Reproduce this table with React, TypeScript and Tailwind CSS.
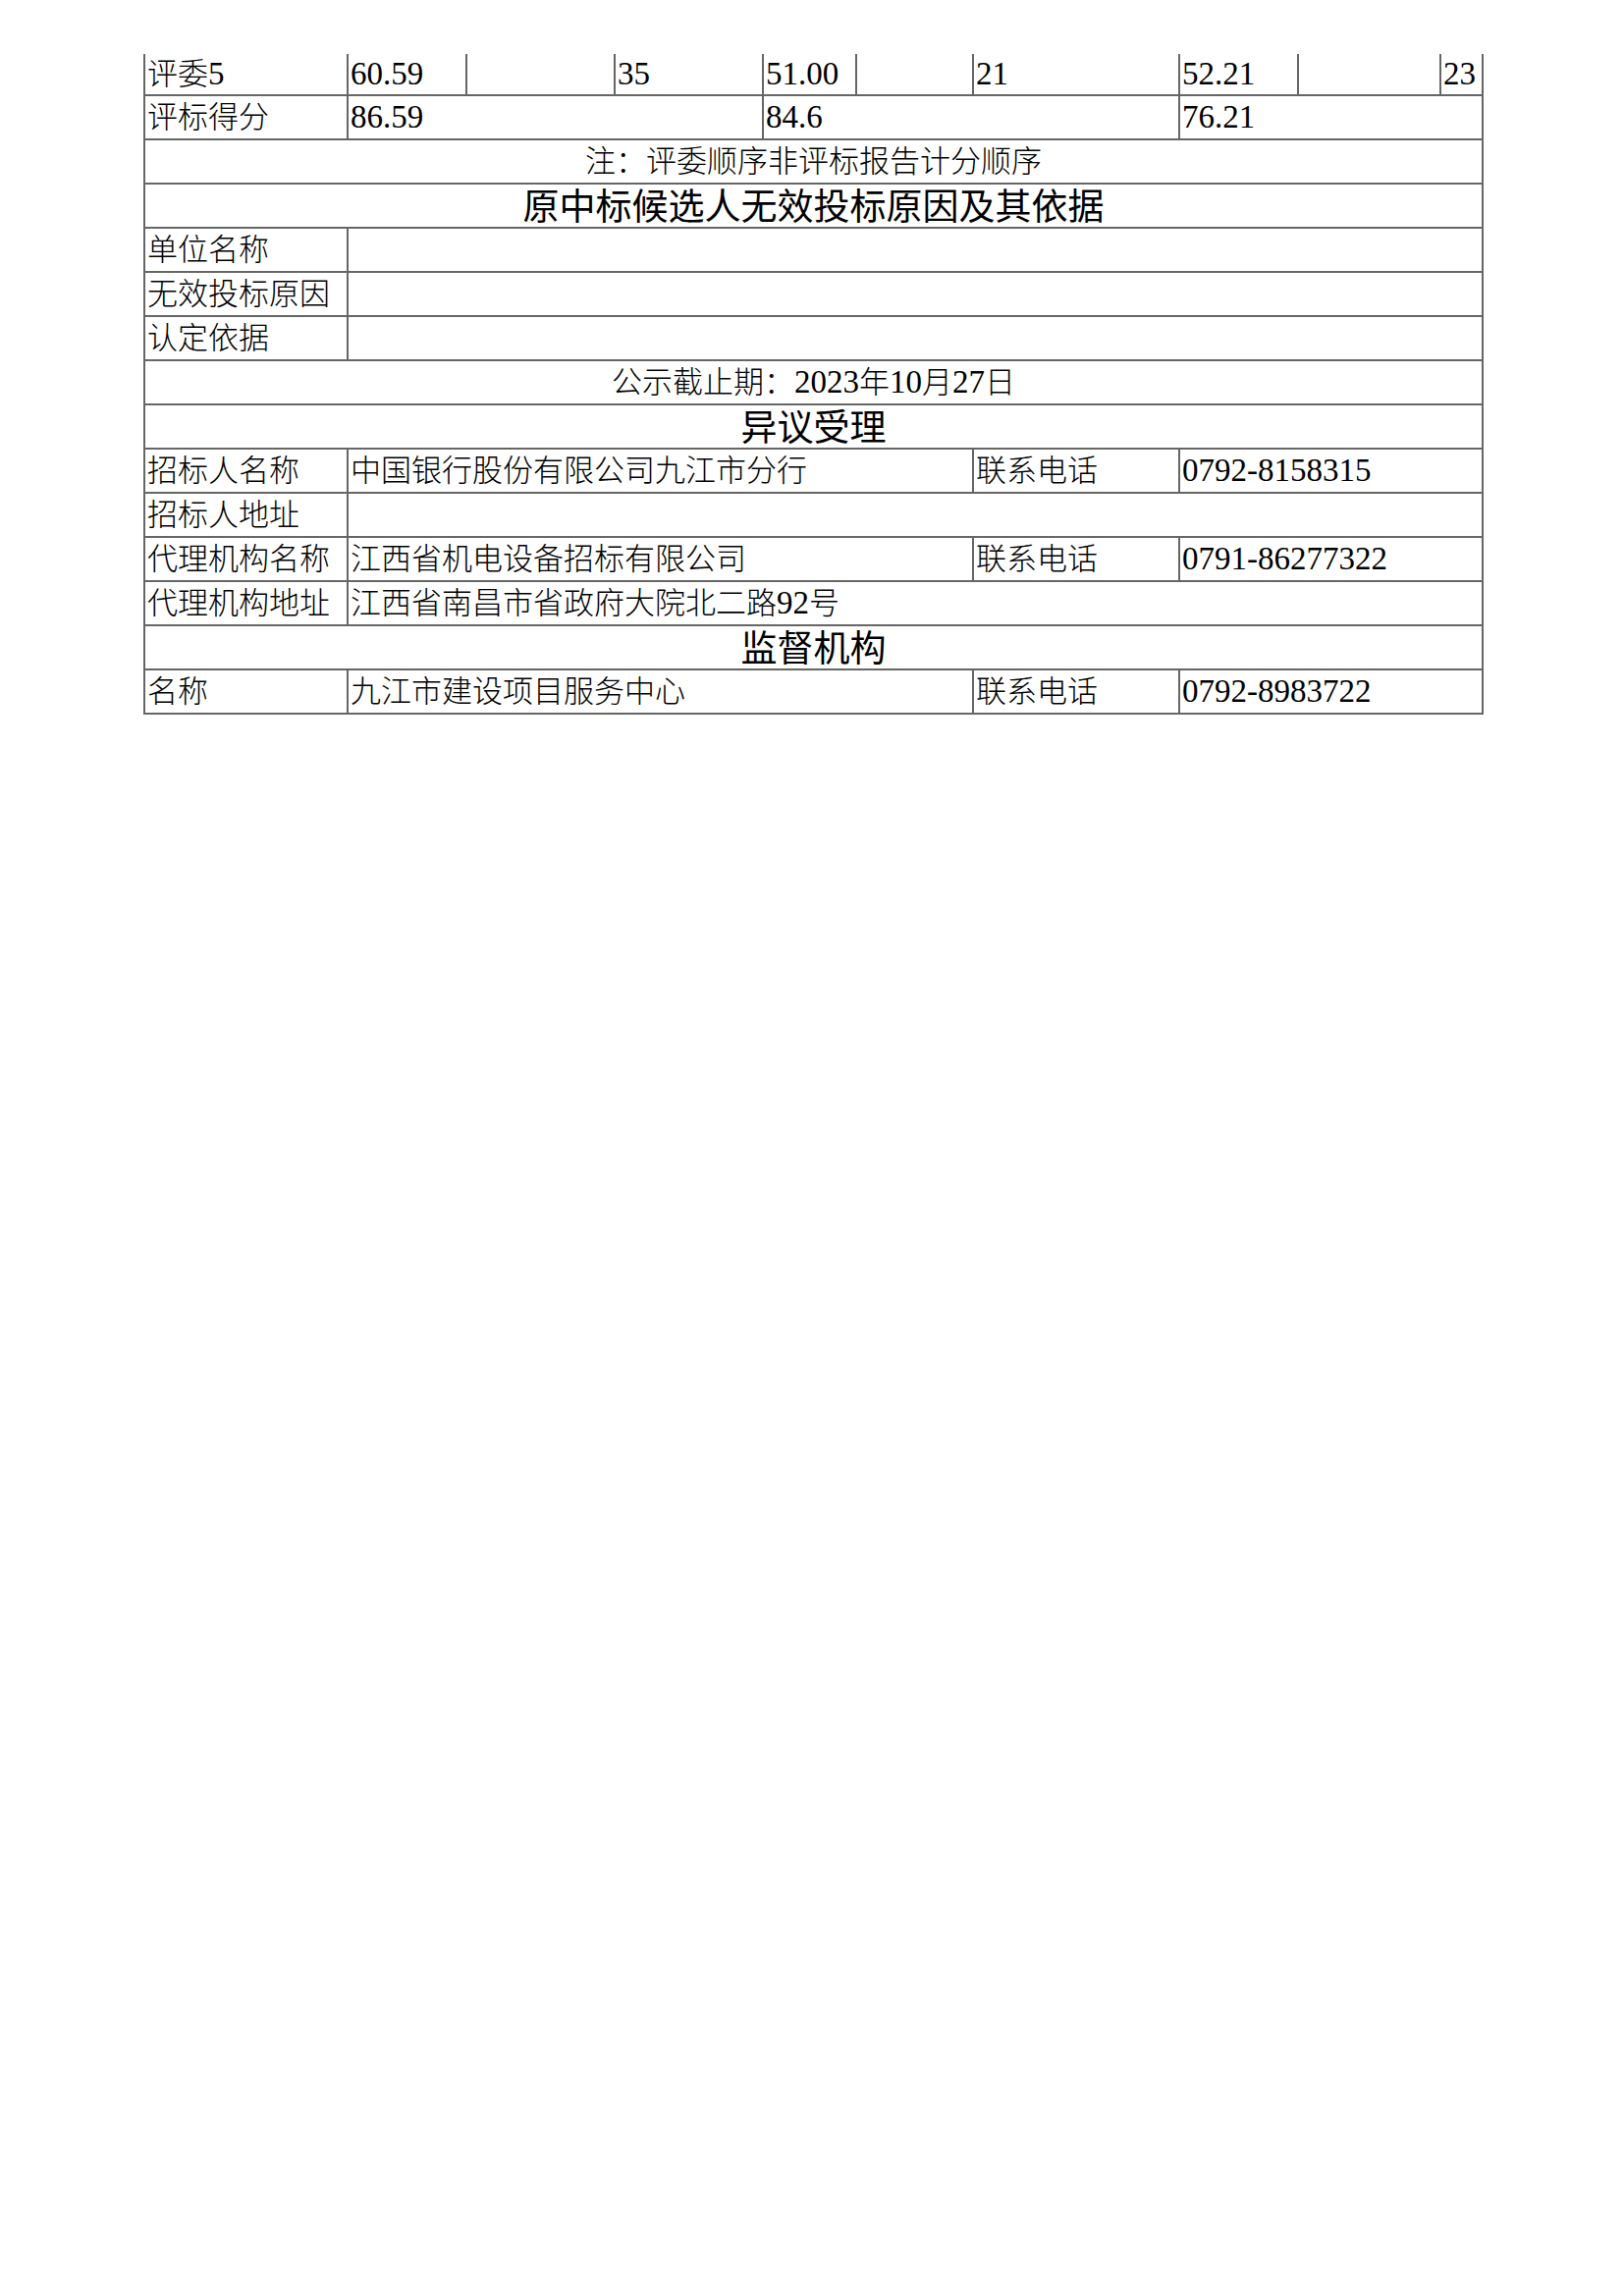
// 评标结果公示表（续页）：评委打分、无效投标原因、异议受理与监督机构

const body = "font-['Liberation_Serif','Noto_Sans_CJK_SC',serif] text-[31px] font-light leading-none";
const head = "font-['Noto_Sans_CJK_SC',sans-serif] text-[37px] font-normal leading-none";

// 单元格基础样式：灰色细框线，垂直居中
const cell = "border-2 border-[#666] px-[2px] align-middle text-black";
const left = `${cell} text-left`;
const center = `${cell} text-center`;

// 列宽（像素），总宽 1363
const cols = [207, 121, 151, 151, 95, 119, 210, 121, 145, 43];

// 数字用 Times 字形，字号略大
function N({ children }: { children: string }) {
  return <span className="text-[33px]">{children}</span>;
}

type Contact = { label: string; value: string; phone?: string };

const bidderRows: Contact[] = [
  { label: "招标人名称", value: "中国银行股份有限公司九江市分行", phone: "0792-8158315" },
  { label: "招标人地址", value: "" },
  { label: "代理机构名称", value: "江西省机电设备招标有限公司", phone: "0791-86277322" },
];

function ContactRow({ label, value, phone }: Contact) {
  if (phone === undefined) {
    return (
      <tr className="h-[45px]">
        <td className={left}>{label}</td>
        <td className={left} colSpan={9}>{value}</td>
      </tr>
    );
  }
  return (
    <tr className="h-[45px]">
      <td className={left}>{label}</td>
      <td className={left} colSpan={5}>{value}</td>
      <td className={left}>联系电话</td>
      <td className={left} colSpan={3}><N>{phone}</N></td>
    </tr>
  );
}

function SectionHead({ title }: { title: string }) {
  return (
    <tr className="h-[45px]">
      <td className={center} colSpan={10}>
        <span className={head}>{title}</span>
      </td>
    </tr>
  );
}

export default function App() {
  const top = `${left} border-t-0`;
  return (
    <div className="min-h-[2339px] w-[1654px] bg-white pt-[55px] pl-[146px]">
      <table className={`w-[1363px] table-fixed border-collapse ${body}`}>
        <colgroup>
          {cols.map((w, i) => (
            <col key={i} style={{ width: w }} />
          ))}
        </colgroup>
        <tbody>
          {/* 评委5 分数行（上一页延续，无顶框） */}
          <tr className="h-[42px]">
            <td className={top}>评委<N>5</N></td>
            <td className={top}><N>60.59</N></td>
            <td className={top}></td>
            <td className={top}><N>35</N></td>
            <td className={top}><N>51.00</N></td>
            <td className={top}></td>
            <td className={top}><N>21</N></td>
            <td className={top}><N>52.21</N></td>
            <td className={top}></td>
            <td className={top}><N>23</N></td>
          </tr>
          <tr className="h-[45px]">
            <td className={left}>评标得分</td>
            <td className={left} colSpan={3}><N>86.59</N></td>
            <td className={left} colSpan={3}><N>84.6</N></td>
            <td className={left} colSpan={3}><N>76.21</N></td>
          </tr>
          <tr className="h-[45px]">
            <td className={center} colSpan={10}>注：评委顺序非评标报告计分顺序</td>
          </tr>

          <SectionHead title="原中标候选人无效投标原因及其依据" />
          {["单位名称", "无效投标原因", "认定依据"].map((l) => (
            <tr key={l} className="h-[45px]">
              <td className={left}>{l}</td>
              <td className={left} colSpan={9}></td>
            </tr>
          ))}
          <tr className="h-[45px]">
            <td className={center} colSpan={10}>
              公示截止期：<N>2023</N>年<N>10</N>月<N>27</N>日
            </td>
          </tr>

          <SectionHead title="异议受理" />
          {bidderRows.map((r) => (
            <ContactRow key={r.label} {...r} />
          ))}
          <tr className="h-[45px]">
            <td className={left}>代理机构地址</td>
            <td className={left} colSpan={9}>
              江西省南昌市省政府大院北二路<N>92</N>号
            </td>
          </tr>

          <SectionHead title="监督机构" />
          <ContactRow label="名称" value="九江市建设项目服务中心" phone="0792-8983722" />
        </tbody>
      </table>
    </div>
  );
}
